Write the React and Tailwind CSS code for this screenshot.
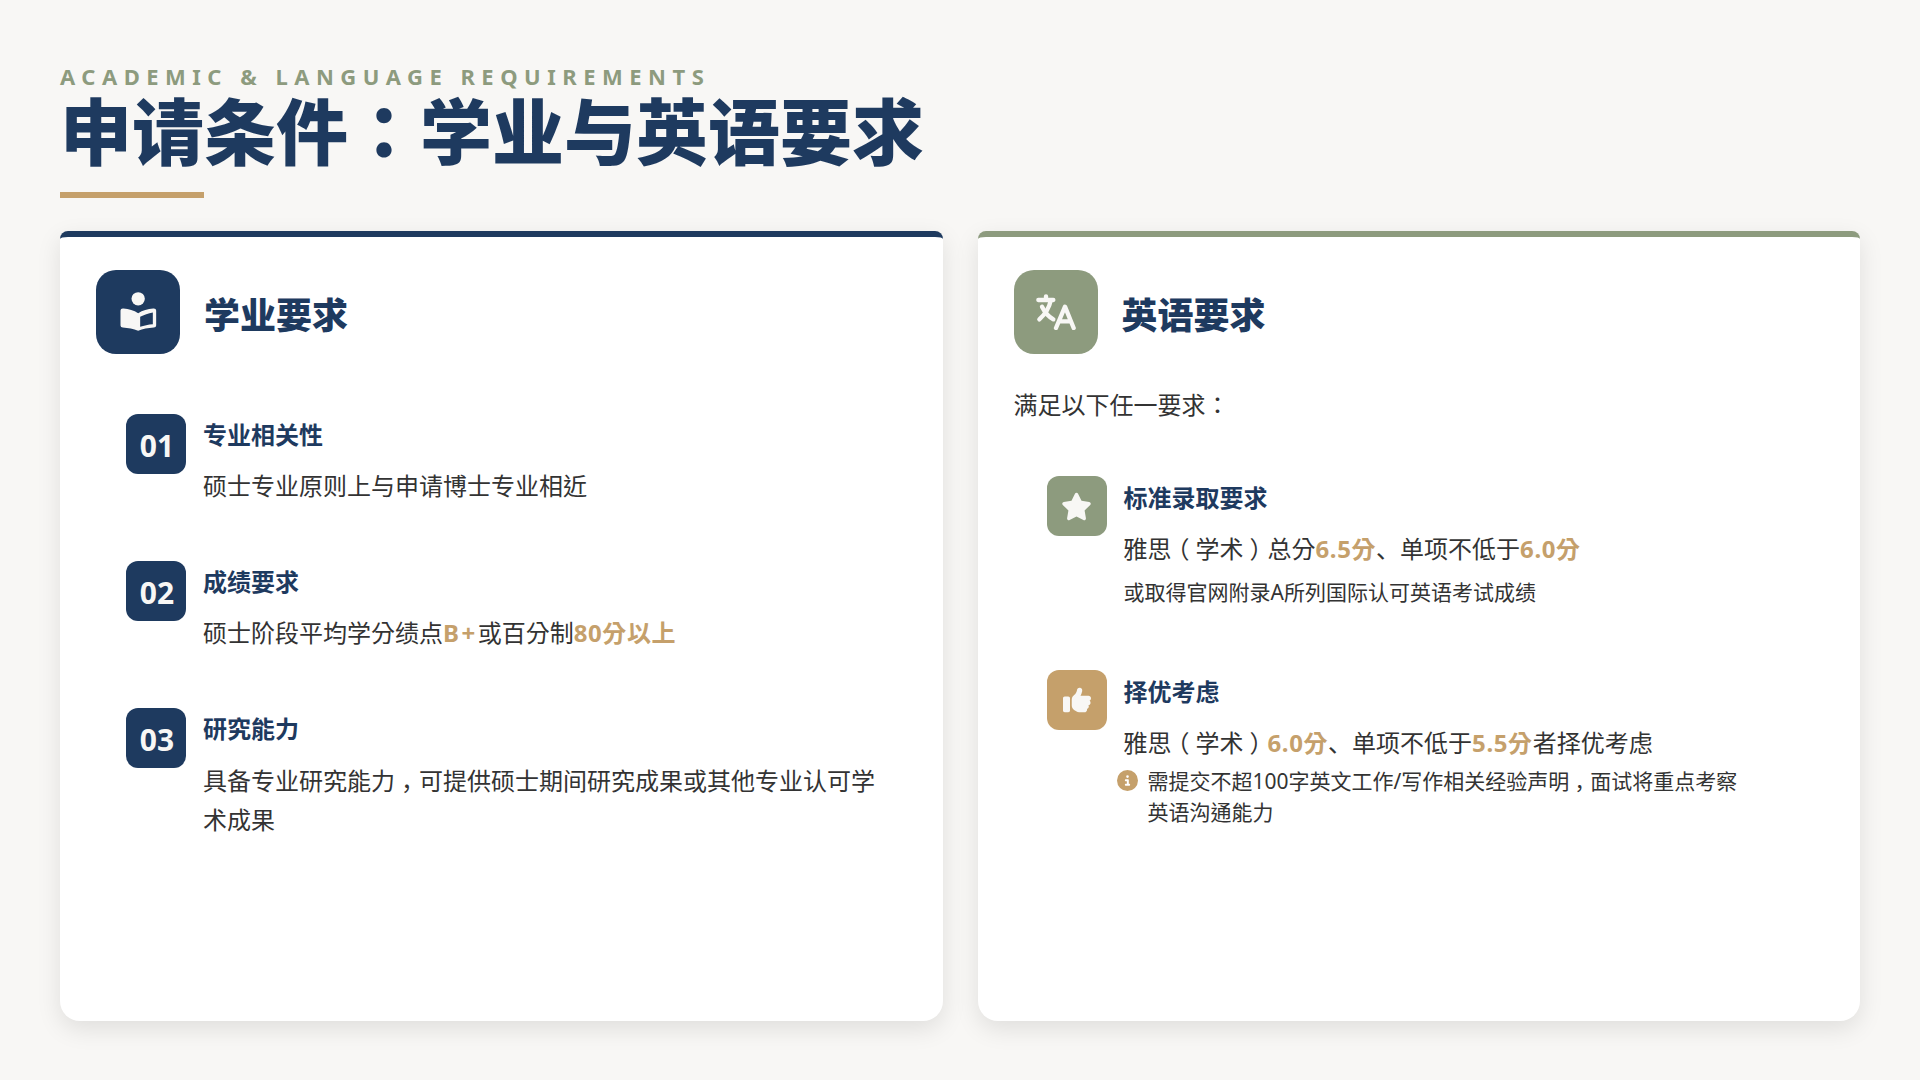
import { FaStar, FaThumbsUp, FaCircleInfo } from 'react-icons/fa6';

const academicItems = [
  {
    num: '01',
    title: '专业相关性',
    desc: '硕士专业原则上与申请博士专业相近',
  },
  {
    num: '02',
    title: '成绩要求',
    desc: (
      <>
        硕士阶段平均学分绩点<span className="font-bold tracking-[2.5px] text-[#c5a06b]">B+</span>或百分制<Gold>80分以上</Gold>
      </>
    ),
  },
  {
    num: '03',
    title: '研究能力',
    desc: (
      <>
        具备专业研究能力<Comma />可提供硕士期间研究成果或其他专业认可学术成果
      </>
    ),
  },
];

function Gold({ children }) {
  return <span className="font-bold tracking-[0.6px] text-[#c5a06b]">{children}</span>;
}

// full-width bracket sitting in the middle of its em box
function Paren({ children }) {
  return <span className="inline-block w-[1em] text-center [font-feature-settings:'halt']">{children}</span>;
}

function Comma() {
  return <span className="inline-block w-[1em] text-center font-['Noto_Sans_CJK_SC'] [font-feature-settings:'halt']">，</span>;
}

function Dun() {
  return <span className="font-['Noto_Sans_CJK_SC']">、</span>;
}

function ReaderIcon() {
  return (
    <svg width="45" height="45" viewBox="76.5 88.5 135 135" fill="currentColor">
      <circle cx="143" cy="115" r="20" />
      <path
        fillRule="evenodd"
        d="M90 150 Q90 143 99 144 C115 145 130 150 143 158 C156 150 172 145 188 144 Q197 143 197 150 V195 Q197 201 190 201 C172 202 157 205 143 211 C129 205 113 202 97 201 Q90 201 90 195 Z M149 169 C160 163 174 158 187 156 V191 C174 192 160 195 149 199 Z"
      />
    </svg>
  );
}

function TranslateIcon() {
  return (
    <svg width="40" height="36" viewBox="0 0 120 108" fill="none" stroke="currentColor" strokeWidth="13" strokeLinecap="round" strokeLinejoin="round">
      <path d="M7 18 H52 M30 7 V16" />
      <path d="M44 20 C40 40 26 62 10 76" />
      <path d="M18 38 C26 54 38 68 52 76" />
      <path d="M60 102 L87 38 L113 102 M72 82 H102" />
    </svg>
  );
}

function CardHeader({ icon, title, boxClass }) {
  return (
    <div className="flex items-center gap-6">
      <div className={`flex h-[84px] w-[84px] items-center justify-center rounded-[20px] text-[#f8f7f5] ${boxClass}`}>
        {icon}
      </div>
      <h2 className="pt-[7px] text-[36px] font-black leading-none text-[#1e3a5f]">{title}</h2>
    </div>
  );
}

export default function App() {
  return (
    <div
      className="flex h-[1080px] w-[1920px] flex-col overflow-hidden bg-[#f8f7f5] px-[60px] pb-[59px] pt-[60px] text-[#333333]"
      style={{ fontFamily: '"Noto Sans", "Noto Sans CJK TC", sans-serif' }}
    >
      <header>
        <p className="text-[22px] font-bold uppercase leading-[33px] tracking-[6.5px] text-[#8d9b7e]">
          Academic &amp; Language Requirements
        </p>
        <h1 className="text-[72px] font-black leading-[76px] text-[#1e3a5f]">申请条件：学业与英语要求</h1>
        <div className="mt-[23px] h-1.5 w-[144px] bg-[#c5a06b]" />
      </header>

      <main className="mt-[33px] grid flex-1 grid-cols-2 gap-[35px]">
        <section className="rounded-b-[20px] rounded-t-lg border-t-[6px] border-[#1e3a5f] bg-white px-9 pt-[33px] shadow-[0_8px_24px_rgba(0,0,0,0.1)]">
          <CardHeader icon={<ReaderIcon />} title="学业要求" boxClass="bg-[#1e3a5f]" />
          <div className="mt-[60px] flex flex-col gap-[56px] px-[30px]">
            {academicItems.map((item) => (
              <div key={item.num} className="flex gap-[17px]">
                <div className="flex h-[60px] w-[60px] shrink-0 items-center justify-center rounded-xl bg-[#1e3a5f] pl-0.5 pt-0.5 text-[30px] font-bold text-[#f8f7f5]">
                  {item.num}
                </div>
                <div className="pt-0.5">
                  <h3 className="mb-3 text-2xl font-bold leading-[38px] text-[#1e3a5f]">{item.title}</h3>
                  <p className="text-2xl leading-[39px]">{item.desc}</p>
                </div>
              </div>
            ))}
          </div>
        </section>

        <section className="rounded-b-[20px] rounded-t-lg border-t-[6px] border-[#8d9b7e] bg-white px-9 pt-[33px] shadow-[0_8px_24px_rgba(0,0,0,0.1)]">
          <CardHeader icon={<TranslateIcon />} title="英语要求" boxClass="bg-[#8d9b7e]" />
          <p className="mt-[31px] text-2xl leading-[39px]">满足以下任一要求：</p>

          <div className="mt-[52px] flex flex-col gap-[59px] px-[33px]">
            <div className="flex gap-[17px]">
              <div className="flex h-[60px] w-[60px] shrink-0 items-center justify-center rounded-xl bg-[#8d9b7e] text-[#f8f7f5]">
                <FaStar size={31} />
              </div>
              <div className="pt-[3px]">
                <h3 className="mb-[11px] text-2xl font-bold leading-[38px] text-[#1e3a5f]">标准录取要求</h3>
                <p className="text-2xl leading-[39px]">
                  雅思<Paren>（</Paren>学术<Paren>）</Paren>总分<Gold>6.5分</Gold><Dun />单项不低于<Gold>6.0分</Gold>
                </p>
                <p className="mt-[5px] text-[21px] leading-[38px]">或取得官网附录A所列国际认可英语考试成绩</p>
              </div>
            </div>

            <div className="flex gap-[17px]">
              <div className="flex h-[60px] w-[60px] shrink-0 items-center justify-center rounded-xl bg-[#c5a06b] text-[#f8f7f5]">
                <FaThumbsUp size={28} />
              </div>
              <div className="pt-[3px]">
                <h3 className="mb-[11px] text-2xl font-bold leading-[38px] text-[#1e3a5f]">择优考虑</h3>
                <p className="text-2xl leading-[39px]">
                  雅思<Paren>（</Paren>学术<Paren>）</Paren><Gold>6.0分</Gold><Dun />单项不低于<Gold>5.5分</Gold>者择优考虑
                </p>
                <div className="-ml-[7px] mt-[3px] flex max-w-[631px] gap-2.5 text-[21px] leading-[31px]">
                  <FaCircleInfo size={21} className="mt-[5px] shrink-0 text-[#c5a06b]" />
                  <p>需提交不超100字英文工作/写作相关经验声明<Comma />面试将重点考察英语沟通能力</p>
                </div>
              </div>
            </div>
          </div>
        </section>
      </main>
    </div>
  );
}
